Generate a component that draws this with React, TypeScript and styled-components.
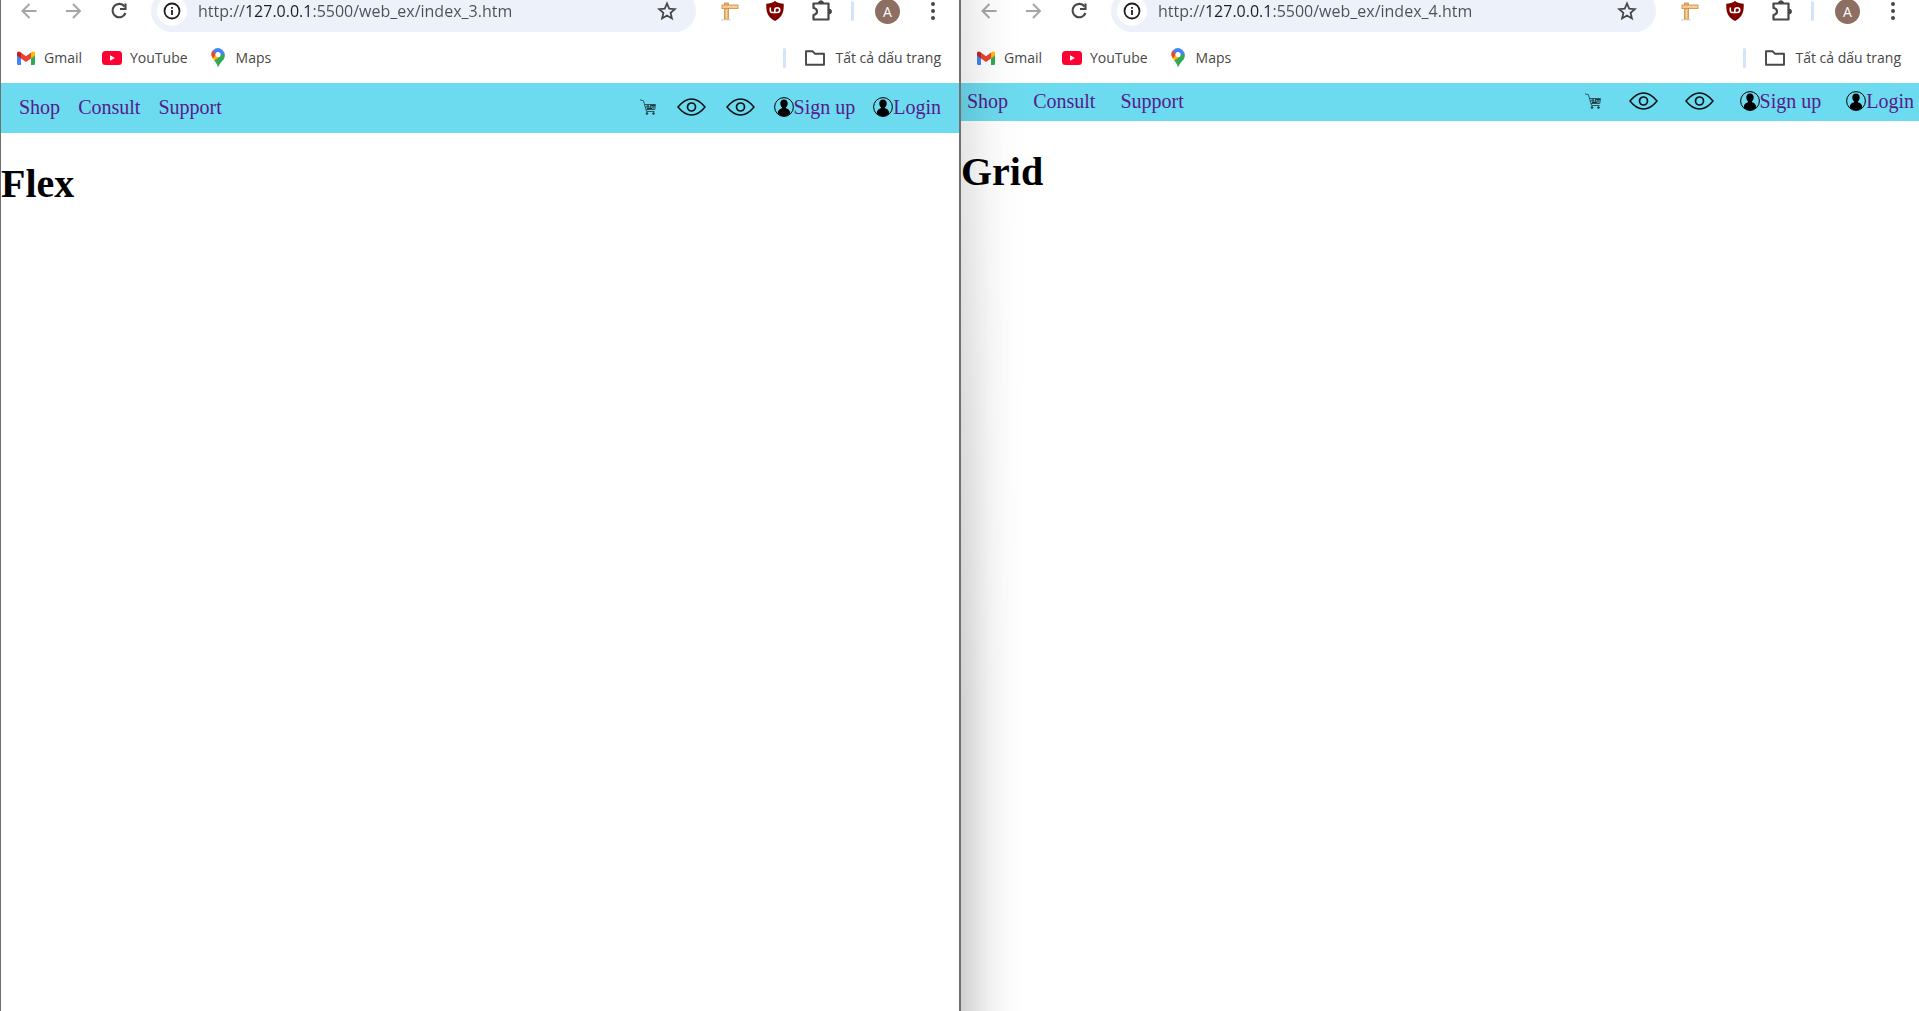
import React from "react";
import styled, { createGlobalStyle } from "styled-components";

const GlobalStyle = createGlobalStyle`
  *, *::before, *::after { box-sizing: border-box; }
  html { background: #fff; }
  body { margin: 0; overflow: hidden; }
`;

const ui = `"Open Sans", "Noto Sans", sans-serif`;
const serif = `"Liberation Serif", "Times New Roman", serif`;

const Desktop = styled.div`
  display: grid;
  grid-template-columns: 1fr 1fr;
  width: calc(100% + 1px);
  min-height: 100vh;
`;

const Window = styled.section<{ $front?: boolean }>`
  position: relative;
  z-index: ${(p) => (p.$front ? 1 : 0)};
  min-width: 0;
  background: #fff;
  border: solid #707070;
  border-width: 0 1px;

  &::after {
    content: "";
    display: ${(p) => (p.$front ? "block" : "none")};
    position: absolute;
    top: 0;
    bottom: 0;
    left: calc(100% + 2px);
    width: 64px;
    pointer-events: none;
    background: linear-gradient(
      to right,
      rgba(0, 0, 0, 0.18) 0%,
      rgba(0, 0, 0, 0.12) 22%,
      rgba(0, 0, 0, 0.06) 45%,
      rgba(0, 0, 0, 0.02) 70%,
      rgba(0, 0, 0, 0) 100%
    );
    mask-image: linear-gradient(to bottom, rgba(0, 0, 0, 0.45), #000 70%);
  }
`;

const Toolbar = styled.div`
  display: flex;
  align-items: center;
  height: 42px;
  margin-top: -10px;
  padding: 0 14px 0 5px;
`;

const IconButton = styled.button<{ $w?: number; $color?: string }>`
  display: flex;
  align-items: center;
  justify-content: center;
  flex: none;
  width: ${(p) => p.$w ?? 45}px;
  height: 32px;
  padding: 0;
  border: 0;
  background: none;
  color: ${(p) => p.$color ?? "#474747"};
`;

const AddressBar = styled.div`
  display: flex;
  align-items: center;
  flex: 1;
  min-width: 0;
  height: 42px;
  margin: 0 11px 0 10px;
  padding: 0 7px 0 6px;
  border-radius: 21px;
  background: #ecf1fa;
`;

const SiteInfo = styled.button`
  display: flex;
  align-items: center;
  justify-content: center;
  flex: none;
  width: 30px;
  height: 30px;
  padding: 0;
  border: 0;
  border-radius: 50%;
  background: #fff;
  color: #1f1f1f;
`;

const UrlInput = styled.input`
  flex: 1;
  min-width: 0;
  height: 30px;
  margin-left: 11px;
  padding: 0;
  border: 0;
  outline: 0;
  font: 16px/26px ${ui};
  color: transparent;
  background: linear-gradient(to right, #4c4f53 47px, #1f1f1f 47px, #1f1f1f 114px, #4c4f53 114px);
  background-clip: text;
`;

const Divider = styled.span`
  flex: none;
  width: 3px;
  height: 20px;
  border-radius: 2px;
  background: #d3e3fd;
`;

const Profile = styled.div`
  display: flex;
  align-items: center;
  gap: 21px;
  margin: 0 21px 0 4px;
`;

const Avatar = styled.button`
  flex: none;
  width: 25px;
  height: 25px;
  padding: 0;
  border: 0;
  border-radius: 50%;
  background: #8d6e63;
  color: #fff;
  font: 14px/25px ${ui};
  text-align: center;
`;

const Bookmarks = styled.div`
  display: flex;
  align-items: center;
  gap: 20px;
  height: 51px;
  padding: 0 18px 0 15px;
`;

const Bookmark = styled.a<{ $gap?: number }>`
  display: flex;
  align-items: center;
  gap: ${(p) => p.$gap ?? 8}px;
  font: 14px/20px ${ui};
  color: #474747;
  text-decoration: none;
  white-space: nowrap;
`;

const BookmarksEnd = styled.div`
  display: flex;
  align-items: center;
  gap: 18px;
  margin-left: auto;
`;

const FlexNav = styled.nav`
  display: flex;
  align-items: center;
  justify-content: space-between;
  height: 50px;
  padding: 0 18px 2px;
  background: #6ddbef;
`;

const FlexGroup = styled.div`
  display: flex;
  align-items: center;
  gap: 18px;
`;

const GridNav = styled.nav`
  display: grid;
  grid-template-columns: auto auto;
  align-items: center;
  justify-content: space-between;
  height: 38px;
  padding: 0 5px 2px 6px;
  background: #6ddbef;
`;

const GridGroup = styled.div`
  display: grid;
  grid-auto-flow: column;
  align-items: center;
  gap: 25px;
`;

const NavLink = styled.a`
  display: flex;
  align-items: center;
  font: 20px/24px ${serif};
  color: #551a8b;
  text-decoration: none;
  white-space: nowrap;
`;

const Title = styled.h1`
  margin: 28px 0;
  font: bold 40px/46px ${serif};
  color: #000;
`;

const Arrow = ({ flip }: { flip?: boolean }) => (
  <svg width="20" height="20" viewBox="0 0 20 20" fill="none" stroke="currentColor" strokeWidth="2">
    <path d={flip ? "M2 10H16M9 3L16 10L9 17" : "M17.500 10H3.500M10.500 3L3.500 10L10.500 17"} />
  </svg>
);

const Reload = () => (
  <svg width="20" height="20" viewBox="0 0 20 20" fill="none" stroke="currentColor" strokeWidth="2.100">
    <path d="M15.600 5.500A6.700 6.700 0 1 0 16.500 12" />
    <path d="M16.500 2.500V8H11" />
  </svg>
);

const Info = () => (
  <svg width="18" height="18" viewBox="0 0 18 18" fill="none" stroke="currentColor">
    <circle cx="9" cy="9" r="7.500" strokeWidth="1.800" />
    <path d="M9 8V13M9 5V6.800" strokeWidth="1.800" />
  </svg>
);

const Star = () => (
  <svg width="20" height="20" viewBox="0 0 20 20" fill="none" stroke="currentColor" strokeWidth="1.800">
    <path d="M10 2.500L12.200 7.700L17.900 8.200L13.600 11.900L14.900 17.400L10 14.500L5.100 17.400L6.400 11.900L2.100 8.200L7.800 7.700Z" />
  </svg>
);

const Ruler = () => (
  <svg width="20" height="20" viewBox="0 0 20 20">
    <path d="M1 18H11V19.500H1Z" fill="#ddd" />
    <rect x="4.500" y="2" width="4" height="16" fill="#eeb877" stroke="#d08c48" strokeWidth=".8" />
    <rect x="2" y="4" width="16" height="3.600" fill="#f3c088" stroke="#d08c48" strokeWidth=".8" />
    <path d="M3 5.800H18M6.500 9V18" stroke="#fbe3c0" strokeDasharray="1.500 1" />
  </svg>
);

const Shield = () => (
  <svg width="20" height="20" viewBox="0 0 20 20">
    <path d="M10 0C7.500 2 4.500 2.600 1.300 2.700C1 11 2.500 16 10 20C17.500 16 19 11 18.700 2.700C15.500 2.600 12.500 2 10 0Z" fill="#800000" />
    <path d="M5.300 6.500V9.200Q5.300 11.500 7.600 11.500H12.300A2.400 2.400 0 0 0 12.300 6.700Q9.800 6.700 9.800 9.200V11.500" fill="none" stroke="#fff" strokeWidth="1.600" />
  </svg>
);

const Puzzle = () => (
  <svg width="22" height="22" viewBox="0 0 22 22" fill="none" stroke="#474747" strokeWidth="2.200" strokeLinejoin="round">
    <path d="M2.500 3.500H17.500V19.500H2.500V15Q6 14.500 6 11.500Q6 8.500 2.500 8Z" />
    <path d="M7.500 3Q7.500 .8 10 .8Q12.500 .8 12.500 3ZM18 9Q20.500 9 20.500 11.500Q20.500 14 18 14Z" fill="#474747" strokeWidth="1" />
  </svg>
);

const Dots = () => (
  <svg width="6" height="20" viewBox="0 0 6 20" fill="currentColor">
    <circle cx="3" cy="3" r="2" />
    <circle cx="3" cy="10" r="2" />
    <circle cx="3" cy="17" r="2" />
  </svg>
);

const Gmail = () => (
  <svg width="20" height="20" viewBox="0 0 20 20">
    <path d="M1 5V15.500Q1 17 2.300 17H5V8.500Z" fill="#4285f4" />
    <path d="M19 5V15.500Q19 17 17.700 17H15V8.500Z" fill="#34a853" />
    <path d="M15 4.500L17 3.400Q19 3.200 19 5.200V7.500L15 10.500Z" fill="#fbbc04" />
    <path d="M5 4.500L10 8.300L15 4.500V10.500L10 14L5 10.500Z" fill="#ea4335" />
    <path d="M5 4.500L3 3.400Q1 3.200 1 5.200V7.500L5 10.500Z" fill="#c5221f" />
  </svg>
);

const YouTube = () => (
  <svg width="20" height="20" viewBox="0 0 20 20">
    <rect x="0" y="3" width="20" height="14" rx="3.500" fill="#ff0033" />
    <path d="M8 7.200L13 10L8 12.800Z" fill="#fff" />
  </svg>
);

const Pin = () => (
  <svg width="20" height="20" viewBox="0 0 20 20">
    <path d="M10 19.500C9.300 16.500 8.500 15.200 6 12.200L13.500 3.500L16.300 4.800C18 9 15.500 12 13 14.500C11.300 16.200 11 17.500 10 19.500Z" fill="#34a853" />
    <path d="M6.200 12.500C4.500 10.500 3.300 8.500 3.300 6L8 5L13 8Z" fill="#fbbc04" />
    <path d="M3.500 7.500Q2.800 4.500 4.900 2.300L9 5.500L5 10.300Z" fill="#ea4335" />
    <path d="M4.800 2.400Q7 0 10 0Q14.500 .3 16.400 5L12 8.500L8 6Z" fill="#4285f4" />
    <circle cx="10" cy="6.500" r="2.600" fill="#fff" />
  </svg>
);

const Folder = () => (
  <svg width="22" height="18" viewBox="0 0 22 18" fill="none" stroke="currentColor" strokeWidth="1.900" strokeLinejoin="round">
    <path d="M2 2.200H8.500L10.800 4.700H20V15.800H2Z" />
  </svg>
);

const Cart = () => (
  <svg width="20" height="20" viewBox="0 0 20 20" fill="none" stroke="#1c3a40" strokeWidth=".8" role="img" aria-label="Cart">
    <path d="M2 2.800L5.500 3.800L8.500 14.500H16.500M6.500 7.500H17.500L16.800 12.500H8M10 7.500V12.500M12.500 7.500V12.500M15 7.500V12.500M7 10H17" />
    <path d="M8.500 9H11M13 8.500H17M9 11.500H14" strokeWidth="1.100" />
    <circle cx="9" cy="16.500" r=".9" fill="#1c3a40" />
    <circle cx="15.500" cy="16.500" r=".9" fill="#1c3a40" />
  </svg>
);

const Eye = () => (
  <svg width="31" height="20" viewBox="0 0 31 20" fill="none" stroke="#061215" strokeWidth="1.500" role="img" aria-label="View">
    <path d="M2 10Q8.500 1.900 15.500 1.900Q22.500 1.900 29 10Q22.500 18.100 15.500 18.100Q8.500 18.100 2 10Z" />
    <circle cx="15.500" cy="10" r="4" strokeWidth="1.700" />
  </svg>
);

const User = () => (
  <svg width="20" height="20" viewBox="0 0 20 20" aria-hidden="true">
    <circle cx="10" cy="10" r="9.400" fill="none" stroke="#000" />
    <path d="M10 2.500C7.500 2.500 6.200 4.200 6.300 6.500C6.300 8.500 7 9.500 8 10.300V11.200C5.500 12 4 13 3.800 16.500Q6.500 19.500 10 19.500Q13.500 19.500 16.200 16.500C16 13 14.500 12 12 11.200V10.300C13 9.500 13.700 8.500 13.700 6.500C13.800 4.200 12.500 2.500 10 2.500Z" />
  </svg>
);

const Chrome = ({ url }: { url: string }) => (
  <header>
    <Toolbar>
      <IconButton aria-label="Back" $color="#a6a6a6"><Arrow /></IconButton>
      <IconButton aria-label="Forward" $color="#a6a6a6"><Arrow flip /></IconButton>
      <IconButton aria-label="Reload"><Reload /></IconButton>
      <AddressBar>
        <SiteInfo aria-label="Site information"><Info /></SiteInfo>
        <UrlInput aria-label="Address" defaultValue={url} spellCheck={false} />
        <IconButton aria-label="Bookmark this page"><Star /></IconButton>
      </AddressBar>
      <IconButton aria-label="Page ruler"><Ruler /></IconButton>
      <IconButton aria-label="Content blocker"><Shield /></IconButton>
      <IconButton aria-label="Extensions" $w={50}><Puzzle /></IconButton>
      <Profile>
        <Divider />
        <Avatar aria-label="Profile">A</Avatar>
      </Profile>
      <IconButton aria-label="Menu" $w={24}><Dots /></IconButton>
    </Toolbar>
    <Bookmarks>
      <Bookmark href="#gmail"><Gmail />Gmail</Bookmark>
      <Bookmark href="#youtube"><YouTube />YouTube</Bookmark>
      <Bookmark href="#maps"><Pin />Maps</Bookmark>
      <BookmarksEnd>
        <Divider />
        <Bookmark href="#all" $gap={10}><Folder />Tất cả dấu trang</Bookmark>
      </BookmarksEnd>
    </Bookmarks>
  </header>
);

const SectionLinks = () => (
  <>
    <NavLink href="#shop">Shop</NavLink>
    <NavLink href="#consult">Consult</NavLink>
    <NavLink href="#support">Support</NavLink>
  </>
);

const AccountLinks = () => (
  <>
    <Cart />
    <Eye />
    <Eye />
    <NavLink href="#signup"><User />Sign up</NavLink>
    <NavLink href="#login"><User />Login</NavLink>
  </>
);

export default function App() {
  return (
    <>
      <GlobalStyle />
      <Desktop>
        <Window $front>
          <Chrome url="http://127.0.0.1:5500/web_ex/index_3.htm" />
          <FlexNav>
            <FlexGroup><SectionLinks /></FlexGroup>
            <FlexGroup><AccountLinks /></FlexGroup>
          </FlexNav>
          <Title>Flex</Title>
        </Window>
        <Window>
          <Chrome url="http://127.0.0.1:5500/web_ex/index_4.htm" />
          <GridNav>
            <GridGroup><SectionLinks /></GridGroup>
            <GridGroup><AccountLinks /></GridGroup>
          </GridNav>
          <Title>Grid</Title>
        </Window>
      </Desktop>
    </>
  );
}
